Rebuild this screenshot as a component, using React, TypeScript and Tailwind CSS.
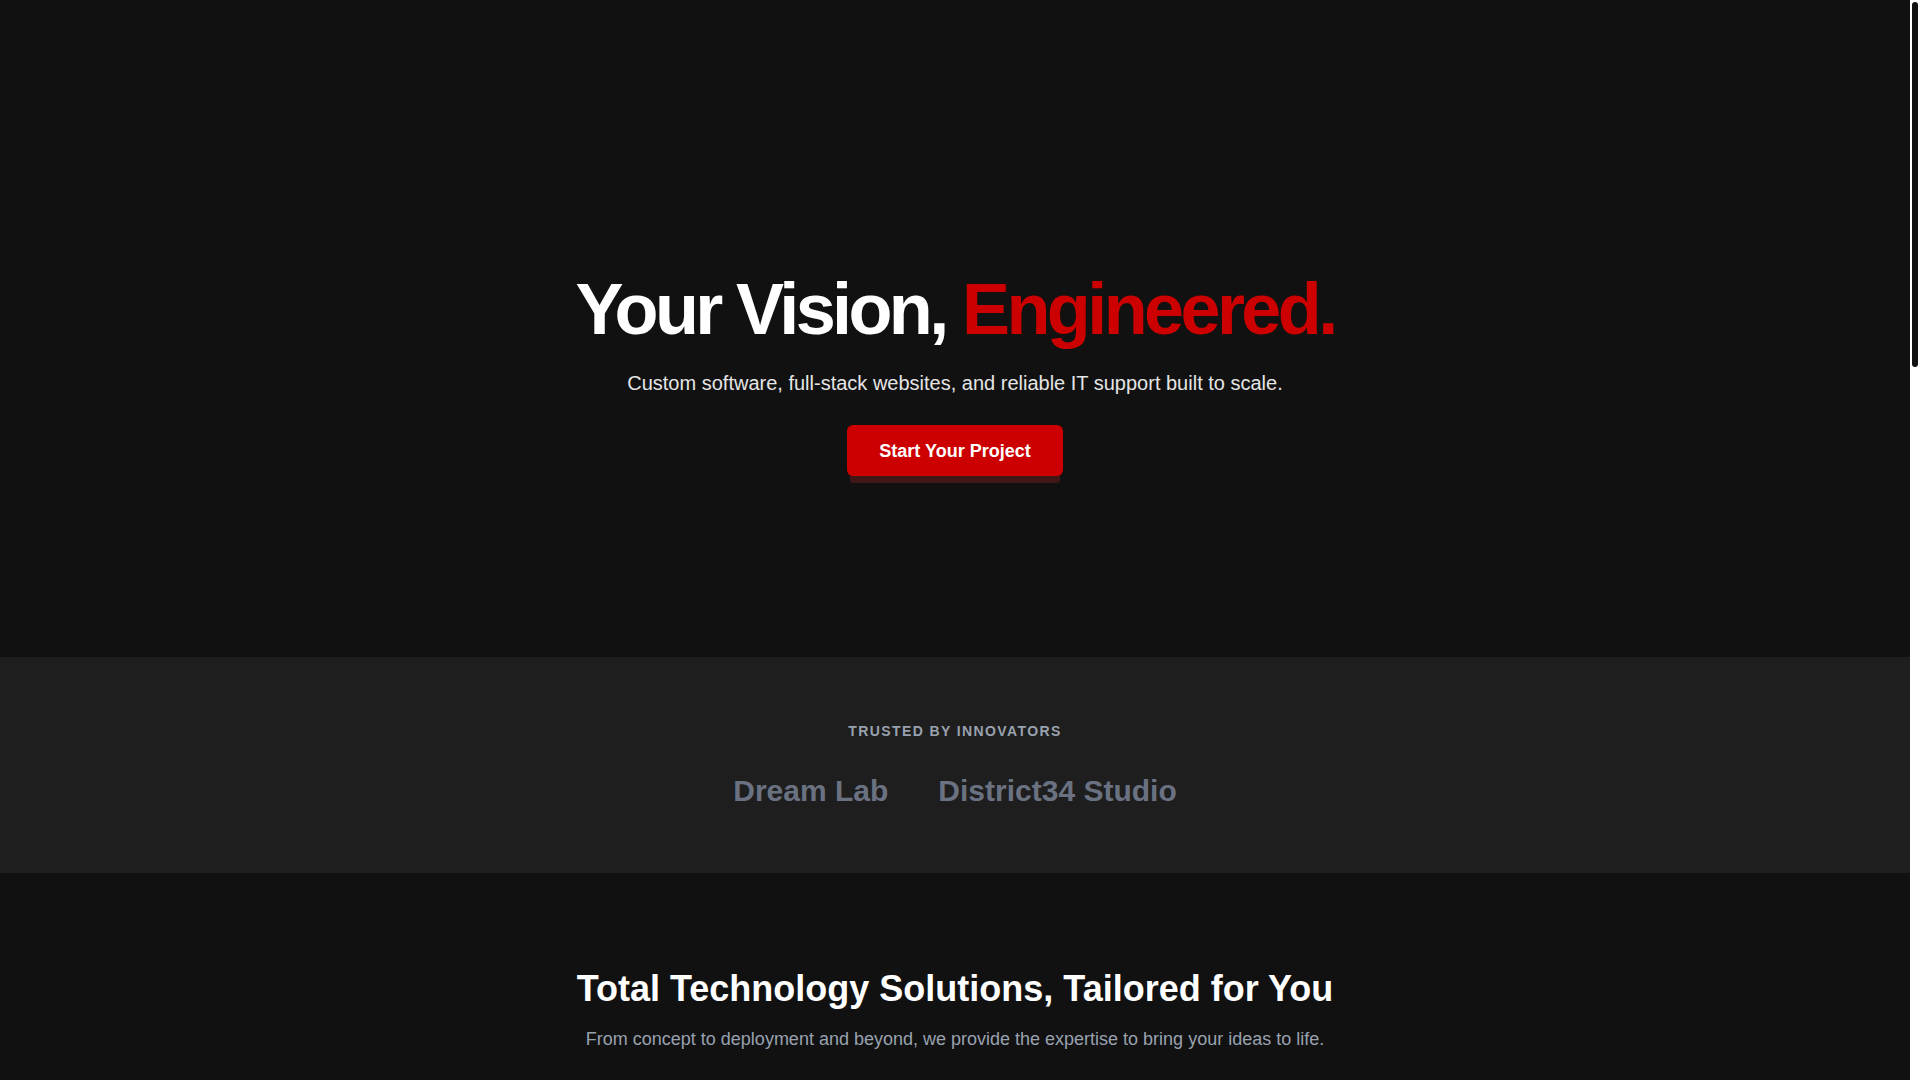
import React from "react";

export default function App() {
  return (
    <div className="h-screen flex bg-[#111111] text-white [font-family:'Liberation_Sans',Arial,Helvetica,sans-serif]">
      <main className="flex-1 min-w-0 overflow-y-auto [scrollbar-width:none] [&::-webkit-scrollbar]:hidden">
        {/* Hero */}
        <section className="bg-[#111111] pt-[273px] pb-[181px] flex flex-col items-center text-center">
          <h1 className="text-7xl font-extrabold tracking-tighter text-white leading-none">
            Your Vision, <span className="text-[#cc0000]">Engineered.</span>
          </h1>
          <p className="mt-6 text-xl leading-7 text-[#e5e5e5]">
            Custom software, full-stack websites, and reliable IT support built to scale.
          </p>
          <button className="mt-[28px] h-[51px] px-8 rounded-md bg-[#cc0000] text-white text-lg font-bold shadow-[0_10px_0_-3px_#411617] flex items-center justify-center">
            Start Your Project
          </button>
        </section>

        {/* Trusted */}
        <section className="bg-[#1e1e1e] py-16 flex flex-col items-center text-center">
          <p className="text-sm leading-5 font-semibold tracking-widest uppercase text-gray-400">
            Trusted by Innovators
          </p>
          <div className="mt-8 flex items-center justify-center gap-[50px] text-3xl leading-9 font-bold text-gray-500">
            <span>Dream Lab</span>
            <span>District34 Studio</span>
          </div>
        </section>

        {/* Services */}
        <section className="bg-[#111111] pt-24 pb-24 flex flex-col items-center text-center">
          <h2 className="text-4xl leading-10 font-bold text-white">
            Total Technology Solutions, Tailored for You
          </h2>
          <p className="mt-4 text-lg leading-7 text-gray-400">
            From concept to deployment and beyond, we provide the expertise to bring your ideas to life.
          </p>
        </section>
      </main>

      {/* Scrollbar as drawn in the reference */}
      <div className="w-[10px] shrink-0 bg-white px-[2px] pt-[2px]">
        <div className="h-[365px] w-full rounded-full bg-[#111111]" />
      </div>
    </div>
  );
}
